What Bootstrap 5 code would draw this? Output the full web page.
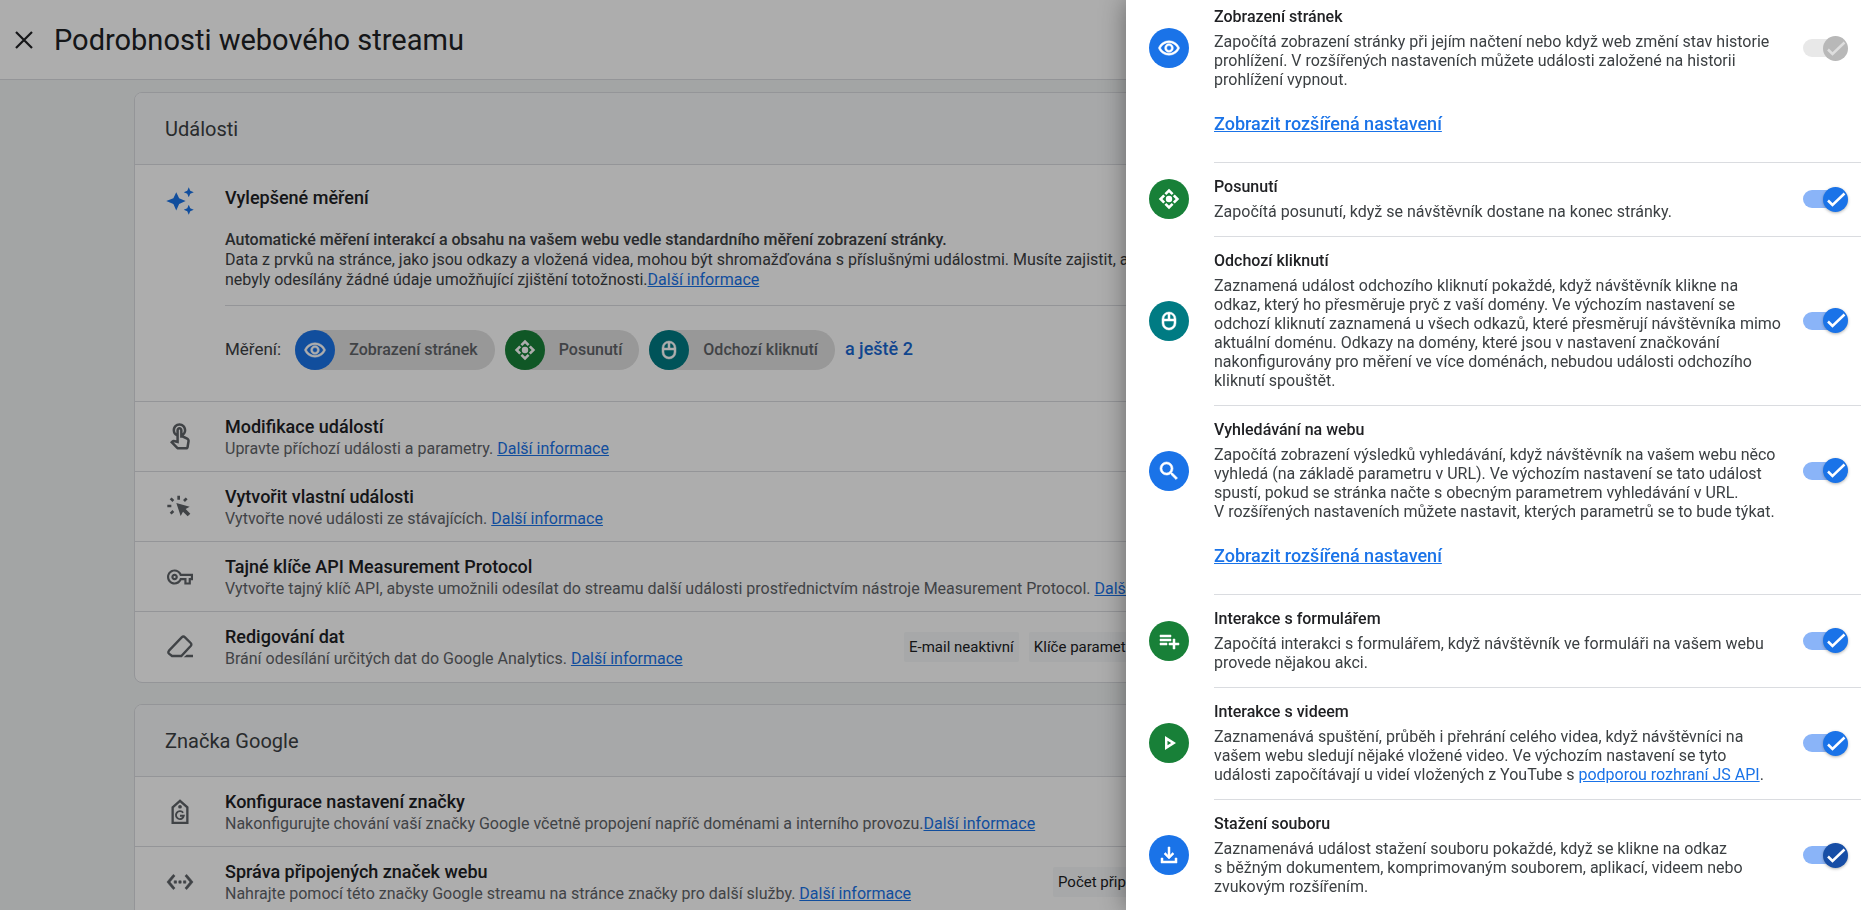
<!DOCTYPE html>
<html lang="cs">
<head>
<meta charset="utf-8">
<meta name="viewport" content="width=device-width, initial-scale=1">
<title>Podrobnosti webového streamu</title>
<link href="https://cdn.jsdelivr.net/npm/bootstrap@5.3.0/dist/css/bootstrap.min.css" rel="stylesheet">
<style>
  body { font-family: Roboto, "Liberation Sans", sans-serif; background: #f1f3f4; color: #3c4043; overflow: hidden; }
  a { color: #1a73e8; }
  svg { display: block; fill: currentColor; }
  .topbar { height: 80px; padding: 0 12px; border-bottom: 1px solid #dadce0; }
  .topbar h1 { margin-left: 18px; font-size: 29px; line-height: 36px; color: #202124; }
  .close-btn { width: 24px; height: 24px; color: #202124; }
  .stream { padding: 12px 134px; gap: 21px; }
  .panel { border: 1px solid #dadce0; border-radius: 8px; overflow: hidden; }
  .panel-head { height: 71px; padding: 0 30px; background: #f6f8f9; }
  .panel-head h2 { font-size: 20px; line-height: 24px; }
  .entry { min-height: 70px; padding: 0 30px; border-top: 1px solid #dadce0; }
  .entry:last-child { min-height: 71px; }
  .entry-icon { flex: 0 0 60px; padding-right: 30px; color: #5f6368; }
  .entry-icon svg { margin: 0 auto; }
  .spark { color: #1a73e8; }
  .entry h3, .measure h3 { font-size: 18px; line-height: 24px; font-weight: 500; color: #202124; }
  .entry p { font-size: 16px; line-height: 20px; color: #5f6368; white-space: nowrap; }
  .tag-group { gap: 10px; font-size: 15px; line-height: 20px; color: #202124; }
  .tag-group span { padding: 5px; background: #f6f8f9; border-radius: 2px; }
  .tags-redact { flex: 0 0 792px; }
  .tags-linked { flex: 0 0 643px; }
  .measure { padding: 21px 0 0 30px; border-top: 1px solid #dadce0; }
  .measure p { font-size: 16px; line-height: 20px; padding-top: 20px; }
  .measure p strong { font-weight: 500; }
  .chips { margin-top: 15px; padding: 24px 0 31px; gap: 10px; border-top: 1px solid #dadce0; font-size: 17px; }
  .chip { height: 40px; border-radius: 20px; background: #e0e0e0; color: #5f6368; font-size: 16px; font-weight: 500; padding-right: 17px; gap: 14px; }
  .disc { width: 40px; height: 40px; flex: none; border-radius: 50%; color: #fff; }
  .disc-blue { background: #1a73e8; }
  .disc-green { background: #188038; }
  .disc-teal { background: #007b83; }
  .more-btn { color: #1967d2; font-size: 18px; font-weight: 500; }
  .offcanvas-backdrop.show { opacity: .32; }
  .offcanvas.settings { width: 735px; max-width: 100%; border: 0; background: #fff; color: #3c4043; box-shadow: 0 0 24px rgba(0,0,0,.4); overflow: hidden; }
  .settings-list { margin-top: -7px; }
  .option { padding-left: 88px; }
  .option-body { border-bottom: 1px solid #dadce0; }
  .option-main { margin-left: -65px; padding: 14px 13px 15px 0; }
  .option-main .disc { margin-right: 25px; }
  .option-text { flex: 0 1 570px; margin-right: 12px; font-size: 16px; line-height: 19px; }
  .option-text label { font-weight: 500; color: #202124; margin-bottom: 6px; }
  .option-more { display: inline-block; height: 58px; padding-top: 8px; font-size: 18px; line-height: 24px; font-weight: 500; }
  .toggle { appearance: none; display: grid; grid-template: 26px / 45px; align-items: center; flex: none; margin: 0 0 0 auto; }
  .toggle::before, .toggle::after { content: ""; grid-area: 1 / 1; }
  .toggle::before { width: 38px; height: 18px; border-radius: 9px; background: #8ab4f8; }
  .toggle::after { justify-self: end; width: 25px; height: 25px; border-radius: 50%; box-shadow: 0 1px 3px rgba(60,64,67,.4);
    background: #1a73e8 url("data:image/svg+xml,%3Csvg xmlns='http://www.w3.org/2000/svg' viewBox='0 0 25 25'%3E%3Cpath d='M5 13.500l4.500 4.500L21.500 6.500' fill='none' stroke='%23fff' stroke-width='2.500'/%3E%3C/svg%3E"); }
  .toggle:disabled::before { background: #e8e8e8; }
  .toggle:disabled::after { background: #b8b8b8 url("data:image/svg+xml,%3Csvg xmlns='http://www.w3.org/2000/svg' viewBox='0 0 25 25'%3E%3Cpath d='M5 13.500l4.500 4.500L21.500 6.500' fill='none' stroke='%23dedede' stroke-width='2.500'/%3E%3C/svg%3E"); box-shadow: none; }
  .toggle-focus::after { background-color: #174ea6; }
</style>
</head>
<body>
<svg class="d-none" xmlns="http://www.w3.org/2000/svg">
  <symbol id="i-eye" viewBox="-.5 -.5 25 25"><path stroke="currentColor" stroke-width=".5" d="M12 6.500c3.790 0 7.170 2.130 8.820 5.500-1.650 3.370-5.030 5.500-8.820 5.500S4.830 15.370 3.180 12C4.830 8.630 8.210 6.500 12 6.500m0-2C7 4.500 2.730 7.610 1 12c1.730 4.390 6 7.500 11 7.500s9.270-3.110 11-7.500c-1.730-4.390-6-7.500-11-7.500zm0 5a2.500 2.500 0 0 1 0 5 2.500 2.500 0 0 1 0-5m0-2a4.500 4.500 0 0 0 0 9 4.500 4.500 0 0 0 0-9z"/></symbol>
  <symbol id="i-scroll" viewBox="0 0 24 24"><circle cx="12" cy="12" r="3.200"/><path d="M8.400 7.200L12 3.600l3.600 3.600M16.800 8.400L20.400 12l-3.600 3.600M15.600 16.800L12 20.400l-3.600-3.600M7.200 15.600L3.600 12l3.600-3.600" fill="none" stroke="currentColor" stroke-width="2.600"/></symbol>
  <symbol id="i-mouse" viewBox="0 0 24 24"><path stroke="currentColor" stroke-width=".5" d="M12 3a7 7 0 0 1 7 7v4a7 7 0 0 1-14 0v-4a7 7 0 0 1 7-7m-1 2.100A5 5 0 0 0 7 10h4zm2 0V10h4a5 5 0 0 0-4-4.900M7 12v2a5 5 0 0 0 10 0v-2z"/></symbol>
  <symbol id="i-search" viewBox="0 0 24 24"><path stroke="currentColor" stroke-width=".6" d="M15.500 14h-.790l-.280-.270A6.470 6.470 0 0 0 16 9.500 6.500 6.500 0 1 0 9.500 16c1.610 0 3.090-.590 4.230-1.570l.270.280v.790l5 4.990L20.490 19zm-6 0a4.500 4.500 0 1 1 0-9 4.500 4.500 0 0 1 0 9z"/></symbol>
  <symbol id="i-form" viewBox="0 0 24 24"><path stroke="currentColor" stroke-width=".5" d="M14 10H3v2h11zm0-4H3v2h11zm4 8v-4h-2v4h-4v2h4v4h2v-4h4v-2zM3 16h7v-2H3z"/></symbol>
  <symbol id="i-play" viewBox="0 0 24 24"><path d="M10.500 9.700L14.200 12l-3.700 2.300zM8 5v14l11-7z"/></symbol>
  <symbol id="i-download" viewBox="0 0 24 24"><path stroke="currentColor" stroke-width=".5" d="M12 16l-5-5 1.400-1.450 2.600 2.600V4h2v8.150l2.600-2.600L17 11zM4 15h2v3h12v-3h2v5H4z"/></symbol>
</svg>

<header class="topbar bg-white d-flex align-items-center">
  <button type="button" class="close-btn btn p-0 border-0" aria-label="Zavřít">
    <svg width="24" height="24" viewBox="0 0 24 24"><path d="M4 4l16 16M20 4L4 20" fill="none" stroke="currentColor" stroke-width="2.200"/></svg>
  </button>
  <h1 class="mb-0 fw-normal">Podrobnosti webového streamu</h1>
</header>

<main class="stream d-flex flex-column">
  <section class="panel bg-white">
    <div class="panel-head d-flex align-items-center"><h2 class="m-0 fw-normal">Události</h2></div>
    <div class="measure d-flex">
      <div class="entry-icon spark"><svg width="30" height="30" viewBox="0 0 24 24"><path d="M9 5l2.300 4.700L16.500 12l-5.200 2.300L9 19.500l-2.300-5.200L1 12l5.700-2.300zM19 1l1.200 2.800L23 5l-2.800 1.200L19 9l-1.200-2.800L15 5l2.800-1.200zM19 15l1.200 2.800L23 19l-2.800 1.200L19 23l-1.200-2.800L15 19l2.800-1.200z"/></svg></div>
      <div class="flex-grow-1">
        <h3 class="m-0">Vylepšené měření</h3>
        <p class="m-0 text-nowrap"><strong>Automatické měření interakcí a obsahu na vašem webu vedle standardního měření zobrazení stránky.</strong><br>
        Data z prvků na stránce, jako jsou odkazy a vložená videa, mohou být shromažďována s příslušnými událostmi. Musíte zajistit, aby<br>
        nebyly odesílány žádné údaje umožňující zjištění totožnosti.<a href="#">Další informace</a></p>
        <div class="chips d-flex align-items-center">
          <span class="me-1">Měření:</span>
          <span class="chip d-inline-flex align-items-center"><span class="disc disc-blue d-grid"><svg class="m-auto" width="24" height="24"><use href="#i-eye"/></svg></span>Zobrazení stránek</span>
          <span class="chip d-inline-flex align-items-center"><span class="disc disc-green d-grid"><svg class="m-auto" width="24" height="24"><use href="#i-scroll"/></svg></span>Posunutí</span>
          <span class="chip d-inline-flex align-items-center"><span class="disc disc-teal d-grid"><svg class="m-auto" width="24" height="24"><use href="#i-mouse"/></svg></span>Odchozí kliknutí</span>
          <button type="button" class="more-btn btn p-0 pb-1 border-0">a ještě 2</button>
        </div>
      </div>
    </div>
    <div class="entry d-flex align-items-center">
      <div class="entry-icon"><svg width="30" height="30" viewBox="0 0 24 24"><path d="M18.190 12.440l-3.240-1.620c1.290-1 2.120-2.560 2.120-4.320C17.070 3.460 14.610 1 11.570 1S6.070 3.460 6.070 6.500c0 2.130 1.220 3.980 3 4.890v3.260c-2.110-.450-2.010-.440-2.260-.440-.530 0-1.030.210-1.410.590L4 16.220l5.090 5.090c.430.440 1.030.690 1.650.690h6.300c.980 0 1.810-.700 1.970-1.670l.800-4.710c.220-1.300-.430-2.580-1.620-3.180zm-.350 2.850l-.800 4.710h-6.300c-.090 0-.170-.040-.240-.100l-3.680-3.680 4.250.890V6.500c0-.280.220-.500.500-.500s.500.220.500.500v6h1.760l3.460 1.730c.400.200.620.630.550 1.060zM8.070 6.500c0-1.930 1.570-3.500 3.500-3.500s3.500 1.570 3.500 3.500c0 .950-.380 1.810-1 2.440V6.500c0-1.380-1.120-2.500-2.500-2.500s-2.500 1.120-2.500 2.500v2.440c-.620-.630-1-1.490-1-2.440z"/></svg></div>
      <div><h3 class="m-0">Modifikace událostí</h3><p class="m-0">Upravte příchozí události a parametry. <a href="#">Další informace</a></p></div>
    </div>
    <div class="entry d-flex align-items-center">
      <div class="entry-icon"><svg width="26" height="26" viewBox="0 0 78 78"><path d="M28 27l40 11-12 7 14 14-8 8-14-14-7 13z"/><path d="M35 5v12M1 36h12M11 13l8 8M59 13l-8 8M11 59l8-8" fill="none" stroke="currentColor" stroke-width="8"/></svg></div>
      <div><h3 class="m-0">Vytvořit vlastní události</h3><p class="m-0">Vytvořte nové události ze stávajících. <a href="#">Další informace</a></p></div>
    </div>
    <div class="entry d-flex align-items-center">
      <div class="entry-icon"><svg width="26" height="26" viewBox="0 0 24 24"><path d="M22 19h-6v-4h-2.680c-1.140 2.420-3.600 4-6.320 4-3.860 0-7-3.140-7-7s3.140-7 7-7c2.720 0 5.170 1.580 6.320 4H24v6h-2v4zm-4-2h2v-4h2v-2H11.940l-.230-.670C11.010 8.340 9.110 7 7 7c-2.760 0-5 2.240-5 5s2.240 5 5 5c2.110 0 4.010-1.340 4.710-3.330l.230-.670H18v4zM7 15c-1.650 0-3-1.350-3-3s1.350-3 3-3 3 1.350 3 3-1.350 3-3 3zm0-4c-.550 0-1 .450-1 1s.450 1 1 1 1-.450 1-1-.450-1-1-1z"/></svg></div>
      <div><h3 class="m-0">Tajné klíče API Measurement Protocol</h3><p class="m-0">Vytvořte tajný klíč API, abyste umožnili odesílat do streamu další události prostřednictvím nástroje Measurement Protocol. <a href="#">Další informace</a></p></div>
    </div>
    <div class="entry d-flex align-items-center">
      <div class="entry-icon"><svg width="26" height="26" viewBox="0 0 78 78"><path d="M6 50L44 10q5-5 10 0l17 17q4 4 0 9L43 66H15l-9-7q-4-4 0-9z" fill="none" stroke="currentColor" stroke-width="7"/><path d="M50 70l9-8h19v8z"/></svg></div>
      <div><h3 class="m-0">Redigování dat</h3><p class="m-0">Brání odesílání určitých dat do Google Analytics. <a href="#">Další informace</a></p></div>
      <div class="tag-group tags-redact d-flex ms-auto"><span>E-mail neaktivní</span><span>Klíče parametrů</span></div>
    </div>
  </section>

  <section class="panel bg-white">
    <div class="panel-head d-flex align-items-center"><h2 class="m-0 fw-normal">Značka Google</h2></div>
    <div class="entry d-flex align-items-center">
      <div class="entry-icon"><svg width="28" height="28" viewBox="0 0 24 24"><path d="M5.700 8L12 2.500 18.300 8v13.300H5.700z" fill="none" stroke="currentColor" stroke-width="2"/><circle cx="12" cy="7.500" r="1.600"/><path d="M14.700 12.700A3.400 3.400 0 1 0 15.300 15.200H12" fill="none" stroke="currentColor" stroke-width="1.600"/></svg></div>
      <div><h3 class="m-0">Konfigurace nastavení značky</h3><p class="m-0">Nakonfigurujte chování vaší značky Google včetně propojení napříč doménami a interního provozu.<a href="#">Další informace</a></p></div>
    </div>
    <div class="entry d-flex align-items-center">
      <div class="entry-icon"><svg width="28" height="28" viewBox="0 0 24 24"><path stroke="currentColor" stroke-width=".5" d="M7.770 6.760L6.230 5.480.820 12l5.410 6.520 1.540-1.280L3.420 12l4.350-5.240zM7 13h2v-2H7v2zm10-2h-2v2h2v-2zm-6 2h2v-2h-2v2zm6.770-7.520l-1.540 1.280L20.580 12l-4.350 5.240 1.540 1.280L23.180 12l-5.410-6.520z"/></svg></div>
      <div><h3 class="m-0">Správa připojených značek webu</h3><p class="m-0">Nahrajte pomocí této značky Google streamu na stránce značky pro další služby. <a href="#">Další informace</a></p></div>
      <div class="tag-group tags-linked d-flex ms-auto"><span>Počet připojených</span></div>
    </div>
  </section>
</main>

<div class="offcanvas-backdrop show"></div>
<aside class="offcanvas offcanvas-end settings show" data-bs-backdrop="false" data-bs-scroll="true" tabindex="-1" aria-label="Vylepšené měření">
  <div class="settings-list">
    <div class="option"><div class="option-body">
      <div class="option-main d-flex align-items-center">
        <span class="disc disc-blue d-grid"><svg class="m-auto" width="24" height="24"><use href="#i-eye"/></svg></span>
        <div class="option-text"><label class="d-block" for="t1">Zobrazení stránek</label>Započítá zobrazení stránky při jejím načtení nebo když web změní stav historie prohlížení. V&nbsp;rozšířených nastaveních můžete události založené na historii prohlížení vypnout.</div>
        <input class="toggle" type="checkbox" role="switch" id="t1" checked disabled>
      </div>
      <a class="option-more" href="#">Zobrazit rozšířená nastavení</a>
    </div></div>
    <div class="option"><div class="option-body">
      <div class="option-main d-flex align-items-center">
        <span class="disc disc-green d-grid"><svg class="m-auto" width="24" height="24"><use href="#i-scroll"/></svg></span>
        <div class="option-text"><label class="d-block" for="t2">Posunutí</label>Započítá posunutí, když se návštěvník dostane na konec stránky.</div>
        <input class="toggle" type="checkbox" role="switch" id="t2" checked>
      </div>
    </div></div>
    <div class="option"><div class="option-body">
      <div class="option-main d-flex align-items-center">
        <span class="disc disc-teal d-grid"><svg class="m-auto" width="24" height="24"><use href="#i-mouse"/></svg></span>
        <div class="option-text"><label class="d-block" for="t3">Odchozí kliknutí</label>Zaznamená událost odchozího kliknutí pokaždé, když návštěvník klikne na odkaz, který ho přesměruje pryč z vaší domény. Ve výchozím nastavení se odchozí kliknutí zaznamená u všech odkazů, které přesměrují návštěvníka mimo aktuální doménu. Odkazy na domény, které jsou v nastavení značkování nakonfigurovány pro měření ve více doménách, nebudou události odchozího kliknutí spouštět.</div>
        <input class="toggle" type="checkbox" role="switch" id="t3" checked>
      </div>
    </div></div>
    <div class="option"><div class="option-body">
      <div class="option-main d-flex align-items-center">
        <span class="disc disc-blue d-grid"><svg class="m-auto" width="24" height="24"><use href="#i-search"/></svg></span>
        <div class="option-text"><label class="d-block" for="t4">Vyhledávání na webu</label>Započítá zobrazení výsledků vyhledávání, když návštěvník na vašem webu něco vyhledá (na základě parametru v URL). Ve výchozím nastavení se tato událost spustí, pokud se stránka načte s obecným parametrem vyhledávání v URL. V&nbsp;rozšířených nastaveních můžete nastavit, kterých parametrů se to bude týkat.</div>
        <input class="toggle" type="checkbox" role="switch" id="t4" checked>
      </div>
      <a class="option-more" href="#">Zobrazit rozšířená nastavení</a>
    </div></div>
    <div class="option"><div class="option-body">
      <div class="option-main d-flex align-items-center">
        <span class="disc disc-green d-grid"><svg class="m-auto" width="24" height="24"><use href="#i-form"/></svg></span>
        <div class="option-text"><label class="d-block" for="t5">Interakce s formulářem</label>Započítá interakci s formulářem, když návštěvník ve formuláři na vašem webu provede nějakou akci.</div>
        <input class="toggle" type="checkbox" role="switch" id="t5" checked>
      </div>
    </div></div>
    <div class="option"><div class="option-body">
      <div class="option-main d-flex align-items-center">
        <span class="disc disc-green d-grid"><svg class="m-auto" width="24" height="24"><use href="#i-play"/></svg></span>
        <div class="option-text"><label class="d-block" for="t6">Interakce s videem</label>Zaznamenává spuštění, průběh i přehrání celého videa, když návštěvníci na vašem webu sledují nějaké vložené video. Ve výchozím nastavení se tyto události započítávají u videí vložených z YouTube s <a href="#">podporou rozhraní JS API</a>.</div>
        <input class="toggle" type="checkbox" role="switch" id="t6" checked>
      </div>
    </div></div>
    <div class="option"><div class="option-body border-0">
      <div class="option-main d-flex align-items-center">
        <span class="disc disc-blue d-grid"><svg class="m-auto" width="24" height="24"><use href="#i-download"/></svg></span>
        <div class="option-text"><label class="d-block" for="t7">Stažení souboru</label>Zaznamenává událost stažení souboru pokaždé, když se klikne na odkaz s&nbsp;běžným dokumentem, komprimovaným souborem, aplikací, videem nebo zvukovým rozšířením.</div>
        <input class="toggle toggle-focus" type="checkbox" role="switch" id="t7" checked>
      </div>
    </div></div>
  </div>
</aside>
<script src="https://cdn.jsdelivr.net/npm/bootstrap@5.3.0/dist/js/bootstrap.bundle.min.js"></script>
</body>
</html>
